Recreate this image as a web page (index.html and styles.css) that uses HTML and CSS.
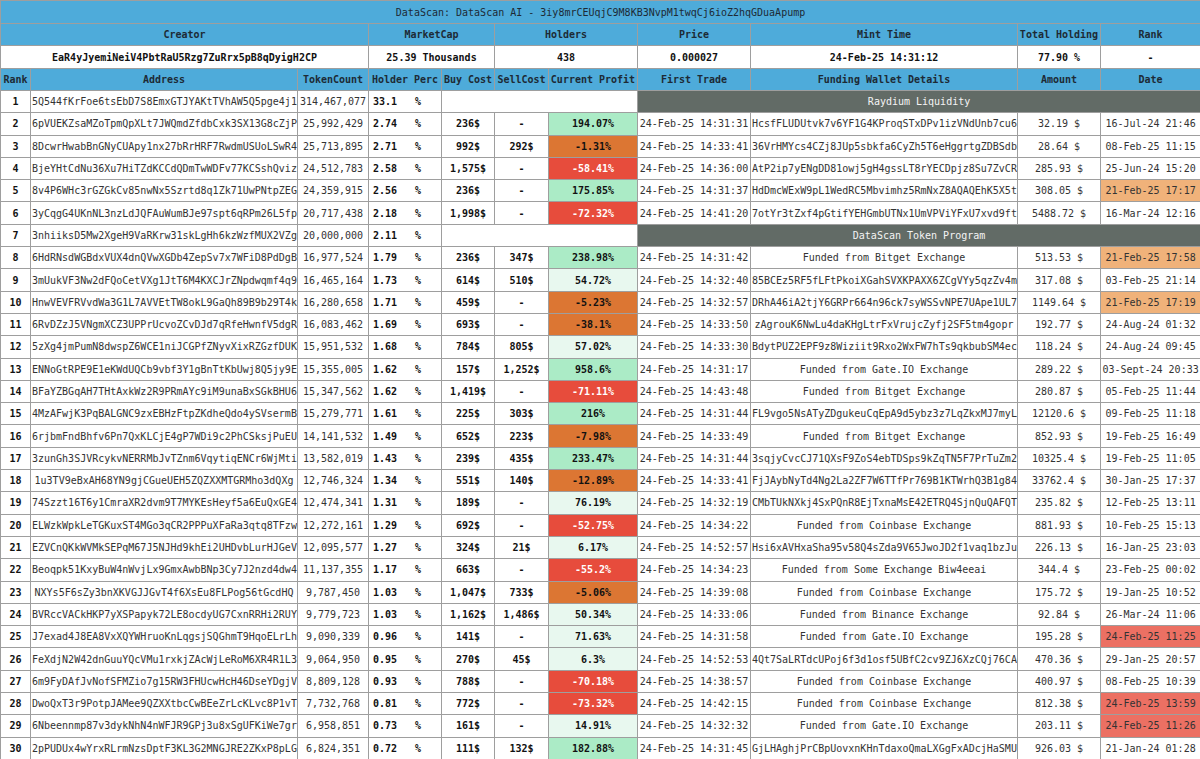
FILE: index.html
```html
<!DOCTYPE html>
<html>
<head>
<meta charset="utf-8">
<link rel="stylesheet" href="styles.css">
</head>
<body>
<table class="scan">
<colgroup>
<col style="width:30px"><col style="width:267px"><col style="width:71px"><col style="width:73px"><col style="width:53px"><col style="width:54px"><col style="width:89px"><col style="width:113px"><col style="width:267px"><col style="width:83px"><col style="width:100px">
</colgroup>
<tr class="title"><td colspan="11">DataScan: DataScan AI - 3iy8mrCEUqjC9M8KB3NvpM1twqCj6ioZ2hqGDuaApump</td></tr>
<tr class="head"><td colspan="3">Creator</td><td colspan="2">MarketCap</td><td colspan="2">Holders</td><td>Price</td><td>Mint Time</td><td>Total Holding</td><td>Rank</td></tr>
<tr class="summary"><td colspan="3">EaR4yJyemiNeiV4PbtRaU5Rzg7ZuRrx5pB8qDyigH2CP</td><td colspan="2">25.39 Thousands</td><td colspan="2">438</td><td>0.000027</td><td>24-Feb-25 14:31:12</td><td>77.90 %</td><td>-</td></tr>
<tr class="head"><td>Rank</td><td>Address</td><td>TokenCount</td><td>Holder Perc</td><td>Buy Cost</td><td>SellCost</td><td>Current Profit</td><td>First Trade</td><td>Funding Wallet Details</td><td>Amount</td><td>Date</td></tr>
<tr class="row"><td class="b">1</td><td>5Q544fKrFoe6tsEbD7S8EmxGTJYAKtTVhAW5Q5pge4j1</td><td>314,467,077</td><td class="perc">33.1 %</td><td colspan="3"></td><td colspan="4" class="sec">Raydium Liquidity</td></tr>
<tr class="row"><td class="b">2</td><td>6pVUEKZsaMZoTpmQpXLt7JWQmdZfdbCxk3SX13G8cZjP</td><td>25,992,429</td><td class="perc">2.74 %</td><td class="b">236$</td><td class="b">-</td><td class="b up">194.07%</td><td>24-Feb-25 14:31:31</td><td>HcsfFLUDUtvk7v6YF1G4KProqSTxDPv1izVNdUnb7cu6</td><td>32.19 $</td><td>16-Jul-24 21:46</td></tr>
<tr class="row"><td class="b">3</td><td>8DcwrHwabBnGNyCUApy1nx27bRrHRF7RwdmUSUoLSwR4</td><td>25,713,895</td><td class="perc">2.71 %</td><td class="b">992$</td><td class="b">292$</td><td class="b dip">-1.31%</td><td>24-Feb-25 14:33:41</td><td>36VrHMYcs4CZj8JUp5sbkfa6CyZh5T6eHggrtgZDBSdb</td><td>28.64 $</td><td>08-Feb-25 11:15</td></tr>
<tr class="row"><td class="b">4</td><td>BjeYHtCdNu36Xu7HiTZdKCCdQDmTwWDFv77KCSshQviz</td><td>24,512,783</td><td class="perc">2.58 %</td><td class="b">1,575$</td><td class="b">-</td><td class="b loss">-58.41%</td><td>24-Feb-25 14:36:00</td><td>AtP2ip7yENgDD81owj5gH4gssLT8rYECDpjz8Su7ZvCR</td><td>285.93 $</td><td>25-Jun-24 15:20</td></tr>
<tr class="row"><td class="b">5</td><td>8v4P6WHc3rGZGkCv85nwNx5Szrtd8q1Zk71UwPNtpZEG</td><td>24,359,915</td><td class="perc">2.56 %</td><td class="b">236$</td><td class="b">-</td><td class="b up">175.85%</td><td>24-Feb-25 14:31:37</td><td>HdDmcWExW9pL1WedRC5Mbvimhz5RmNxZ8AQAQEhK5X5t</td><td>308.05 $</td><td class="recent">21-Feb-25 17:17</td></tr>
<tr class="row"><td class="b">6</td><td>3yCqgG4UKnNL3nzLdJQFAuWumBJe97spt6qRPm26L5fp</td><td>20,717,438</td><td class="perc">2.18 %</td><td class="b">1,998$</td><td class="b">-</td><td class="b loss">-72.32%</td><td>24-Feb-25 14:41:20</td><td>7otYr3tZxf4pGtifYEHGmbUTNx1UmVPViYFxU7xvd9ft</td><td>5488.72 $</td><td>16-Mar-24 12:16</td></tr>
<tr class="row"><td class="b">7</td><td>3nhiiksD5Mw2XgeH9VaRKrw31skLgHh6kzWzfMUX2VZg</td><td>20,000,000</td><td class="perc">2.11 %</td><td colspan="3"></td><td colspan="4" class="sec">DataScan Token Program</td></tr>
<tr class="row"><td class="b">8</td><td>6HdRNsdWGBdxVUX4dnQVwXGDb4ZepSv7x7WFiD8PdDgB</td><td>16,977,524</td><td class="perc">1.79 %</td><td class="b">236$</td><td class="b">347$</td><td class="b up">238.98%</td><td>24-Feb-25 14:31:42</td><td>Funded from Bitget Exchange</td><td>513.53 $</td><td class="recent">21-Feb-25 17:58</td></tr>
<tr class="row"><td class="b">9</td><td>3mUukVF3Nw2dFQoCetVXg1JtT6M4KXCJrZNpdwqmf4q9</td><td>16,465,164</td><td class="perc">1.73 %</td><td class="b">614$</td><td class="b">510$</td><td class="b mild">54.72%</td><td>24-Feb-25 14:32:40</td><td>85BCEz5RF5fLFtPkoiXGahSVXKPAXX6ZCgVYy5qzZv4m</td><td>317.08 $</td><td>03-Feb-25 21:14</td></tr>
<tr class="row"><td class="b">10</td><td>HnwVEVFRVvdWa3G1L7AVVEtTW8okL9GaQh89B9b29T4k</td><td>16,280,658</td><td class="perc">1.71 %</td><td class="b">459$</td><td class="b">-</td><td class="b dip">-5.23%</td><td>24-Feb-25 14:32:57</td><td>DRhA46iA2tjY6GRPr664n96ck7syWSSvNPE7UApe1UL7</td><td>1149.64 $</td><td class="recent">21-Feb-25 17:19</td></tr>
<tr class="row"><td class="b">11</td><td>6RvDZzJ5VNgmXCZ3UPPrUcvoZCvDJd7qRfeHwnfV5dgR</td><td>16,083,462</td><td class="perc">1.69 %</td><td class="b">693$</td><td class="b">-</td><td class="b dip">-38.1%</td><td>24-Feb-25 14:33:50</td><td>zAgrouK6NwLu4daKHgLtrFxVrujcZyfj2SF5tm4gopr</td><td>192.77 $</td><td>24-Aug-24 01:32</td></tr>
<tr class="row"><td class="b">12</td><td>5zXg4jmPumN8dwspZ6WCE1niJCGPfZNyvXixRZGzfDUK</td><td>15,951,532</td><td class="perc">1.68 %</td><td class="b">784$</td><td class="b">805$</td><td class="b mild">57.02%</td><td>24-Feb-25 14:33:30</td><td>BdytPUZ2EPF9z8Wiziit9Rxo2WxFW7hTs9qkbubSM4ec</td><td>118.24 $</td><td>24-Aug-24 09:45</td></tr>
<tr class="row"><td class="b">13</td><td>ENNoGtRPE9E1eKWdUQCb9vbf3Y1gBnTtKbUwj8Q5jy9E</td><td>15,355,005</td><td class="perc">1.62 %</td><td class="b">157$</td><td class="b">1,252$</td><td class="b up">958.6%</td><td>24-Feb-25 14:31:17</td><td>Funded from Gate.IO Exchange</td><td>289.22 $</td><td>03-Sept-24 20:33</td></tr>
<tr class="row"><td class="b">14</td><td>BFaYZBGqAH7THtAxkWz2R9PRmAYc9iM9unaBxSGkBHU6</td><td>15,347,562</td><td class="perc">1.62 %</td><td class="b">1,419$</td><td class="b">-</td><td class="b loss">-71.11%</td><td>24-Feb-25 14:43:48</td><td>Funded from Bitget Exchange</td><td>280.87 $</td><td>05-Feb-25 11:44</td></tr>
<tr class="row"><td class="b">15</td><td>4MzAFwjK3PqBALGNC9zxEBHzFtpZKdheQdo4ySVsermB</td><td>15,279,771</td><td class="perc">1.61 %</td><td class="b">225$</td><td class="b">303$</td><td class="b up">216%</td><td>24-Feb-25 14:31:44</td><td>FL9vgo5NsATyZDgukeuCqEpA9d5ybz3z7LqZkxMJ7myL</td><td>12120.6 $</td><td>09-Feb-25 11:18</td></tr>
<tr class="row"><td class="b">16</td><td>6rjbmFndBhfv6Pn7QxKLCjE4gP7WDi9c2PhCSksjPuEU</td><td>14,141,532</td><td class="perc">1.49 %</td><td class="b">652$</td><td class="b">223$</td><td class="b dip">-7.98%</td><td>24-Feb-25 14:33:49</td><td>Funded from Bitget Exchange</td><td>852.93 $</td><td>19-Feb-25 16:49</td></tr>
<tr class="row"><td class="b">17</td><td>3zunGh3SJVRcykvNERRMbJvTZnm6VqytiqENCr6WjMti</td><td>13,582,019</td><td class="perc">1.43 %</td><td class="b">239$</td><td class="b">435$</td><td class="b up">233.47%</td><td>24-Feb-25 14:31:44</td><td>3sqjyCvcCJ71QXsF9ZoS4ebTDSps9kZqTN5F7PrTuZm2</td><td>10325.4 $</td><td>19-Feb-25 11:05</td></tr>
<tr class="row"><td class="b">18</td><td>1u3TV9eBxAH68YN9gjCGueUEH5ZQZXXMTGRMho3dQXg</td><td>12,746,324</td><td class="perc">1.34 %</td><td class="b">551$</td><td class="b">140$</td><td class="b dip">-12.89%</td><td>24-Feb-25 14:33:41</td><td>FjJAybNyTd4Ng2La2ZF7W6TTfPr769B1KTWrhQ3B1g84</td><td>33762.4 $</td><td>30-Jan-25 17:37</td></tr>
<tr class="row"><td class="b">19</td><td>74Szzt16T6y1CmraXR2dvm9T7MYKEsHeyf5a6EuQxGE4</td><td>12,474,341</td><td class="perc">1.31 %</td><td class="b">189$</td><td class="b">-</td><td class="b mild">76.19%</td><td>24-Feb-25 14:32:19</td><td>CMbTUkNXkj4SxPQnR8EjTxnaMsE42ETRQ4SjnQuQAFQT</td><td>235.82 $</td><td>12-Feb-25 13:11</td></tr>
<tr class="row"><td class="b">20</td><td>ELWzkWpkLeTGKuxST4MGo3qCR2PPPuXFaRa3qtq8TFzw</td><td>12,272,161</td><td class="perc">1.29 %</td><td class="b">692$</td><td class="b">-</td><td class="b loss">-52.75%</td><td>24-Feb-25 14:34:22</td><td>Funded from Coinbase Exchange</td><td>881.93 $</td><td>10-Feb-25 15:13</td></tr>
<tr class="row"><td class="b">21</td><td>EZVCnQKkWVMkSEPqM67J5NJHd9khEi2UHDvbLurHJGeV</td><td>12,095,577</td><td class="perc">1.27 %</td><td class="b">324$</td><td class="b">21$</td><td class="b mild">6.17%</td><td>24-Feb-25 14:52:57</td><td>Hsi6xAVHxaSha95v58Q4sZda9V65JwoJD2f1vaq1bzJu</td><td>226.13 $</td><td>16-Jan-25 23:03</td></tr>
<tr class="row"><td class="b">22</td><td>Beoqpk51KxyBuW4nWvjLx9GmxAwbBNp3Cy7J2nzd4dw4</td><td>11,137,355</td><td class="perc">1.17 %</td><td class="b">663$</td><td class="b">-</td><td class="b loss">-55.2%</td><td>24-Feb-25 14:34:23</td><td>Funded from Some Exchange Biw4eeai</td><td>344.4 $</td><td>23-Feb-25 00:02</td></tr>
<tr class="row"><td class="b">23</td><td>NXYs5F6sZy3bnXKVGJJGvT4f6XsEu8FLPog56tGcdHQ</td><td>9,787,450</td><td class="perc">1.03 %</td><td class="b">1,047$</td><td class="b">733$</td><td class="b dip">-5.06%</td><td>24-Feb-25 14:39:08</td><td>Funded from Coinbase Exchange</td><td>175.72 $</td><td>19-Jan-25 10:52</td></tr>
<tr class="row"><td class="b">24</td><td>BVRccVACkHKP7yXSPapyk72LE8ocdyUG7CxnRRHi2RUY</td><td>9,779,723</td><td class="perc">1.03 %</td><td class="b">1,162$</td><td class="b">1,486$</td><td class="b mild">50.34%</td><td>24-Feb-25 14:33:06</td><td>Funded from Binance Exchange</td><td>92.84 $</td><td>26-Mar-24 11:06</td></tr>
<tr class="row"><td class="b">25</td><td>J7exad4J8EA8VxXQYWHruoKnLqgsjSQGhmT9HqoELrLh</td><td>9,090,339</td><td class="perc">0.96 %</td><td class="b">141$</td><td class="b">-</td><td class="b mild">71.63%</td><td>24-Feb-25 14:31:58</td><td>Funded from Gate.IO Exchange</td><td>195.28 $</td><td class="today">24-Feb-25 11:25</td></tr>
<tr class="row"><td class="b">26</td><td>FeXdjN2W42dnGuuYQcVMu1rxkjZAcWjLeRoM6XR4R1L3</td><td>9,064,950</td><td class="perc">0.95 %</td><td class="b">270$</td><td class="b">45$</td><td class="b mild">6.3%</td><td>24-Feb-25 14:52:53</td><td>4Qt7SaLRTdcUPoj6f3d1osf5UBfC2cv9ZJ6XzCQj76CA</td><td>470.36 $</td><td>29-Jan-25 20:57</td></tr>
<tr class="row"><td class="b">27</td><td>6m9FyDAfJvNofSFMZio7g15RW3FHUcwHcH46DseYDgjV</td><td>8,809,128</td><td class="perc">0.93 %</td><td class="b">788$</td><td class="b">-</td><td class="b loss">-70.18%</td><td>24-Feb-25 14:38:57</td><td>Funded from Coinbase Exchange</td><td>400.97 $</td><td>08-Feb-25 10:39</td></tr>
<tr class="row"><td class="b">28</td><td>DwoQxT3r9PotpJAMee9QZXXtbcCwBEeZrLcKLvc8P1vT</td><td>7,732,768</td><td class="perc">0.81 %</td><td class="b">772$</td><td class="b">-</td><td class="b loss">-73.32%</td><td>24-Feb-25 14:42:15</td><td>Funded from Coinbase Exchange</td><td>812.38 $</td><td class="today">24-Feb-25 13:59</td></tr>
<tr class="row"><td class="b">29</td><td>6Nbeennmp87v3dykNhN4nWFJR9GPj3u8xSgUFKiWe7gr</td><td>6,958,851</td><td class="perc">0.73 %</td><td class="b">161$</td><td class="b">-</td><td class="b mild">14.91%</td><td>24-Feb-25 14:32:32</td><td>Funded from Gate.IO Exchange</td><td>203.11 $</td><td class="today">24-Feb-25 11:26</td></tr>
<tr class="row"><td class="b">30</td><td>2pPUDUx4wYrxRLrmNzsDptF3KL3G2MNGJRE2ZKxP8pLG</td><td>6,824,351</td><td class="perc">0.72 %</td><td class="b">111$</td><td class="b">132$</td><td class="b up">182.88%</td><td>24-Feb-25 14:31:45</td><td>GjLHAghjPrCBpUovxnKHnTdaxoQmaLXGgFxADcjHaSMU</td><td>926.03 $</td><td>21-Jan-24 01:28</td></tr>
</table>
</body>
</html>
```
FILE: styles.css
```css
html, body {
  margin: 0;
  padding: 0;
  background: #ffffff;
}
body {
  font-family: "DejaVu Sans Mono", "Liberation Mono", monospace;
  font-size: 10px;
  color: #333333;
}
.scan {
  border-collapse: collapse;
  table-layout: fixed;
  width: 1200px;
}
.scan td {
  border: 1px solid #9e9e9e;
  padding: 0 1px;
  text-align: center;
  vertical-align: middle;
  white-space: nowrap;
  overflow: hidden;
}
.title td {
  height: 22px;
  background: #4eabda;
  color: #1d2a35;
}
.head td {
  height: 21px;
  background: #4eabda;
  color: #1d2a35;
  font-weight: bold;
}
.summary td {
  height: 22px;
  background: #ffffff;
  color: #111111;
  font-weight: bold;
}
.row td {
  height: 21.3px;
}
.b {
  font-weight: bold;
  color: #111111;
}
.perc {
  text-align: left !important;
  padding-left: 4px !important;
  font-weight: bold;
  color: #111111;
  word-spacing: 12px;
}
.sec {
  background: #626b66;
  color: #f4f4f4;
}
.up { background: #abebc6; }
.mild { background: #e8f8ef; }
.dip { background: #dc7633; }
.loss { background: #e74c3c; color: #ffffff; }
.recent { background: #f0b27a; }
.today { background: #ec7063; }
```
